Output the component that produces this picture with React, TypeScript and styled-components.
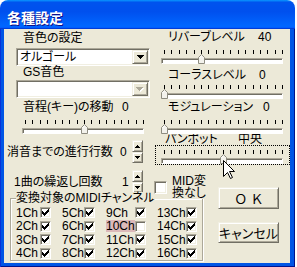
import React from "react";
import styled, { createGlobalStyle } from "styled-components";

const face = "#ece9d8";
const light = "#ffffff";
const soft = "#f1efe2";
const shadow = "#aca899";
const dark = "#716f64";

const GlobalStyle = createGlobalStyle`
  * { box-sizing: border-box; }
  html, body { margin: 0; padding: 0; background: #ffffff; }
  body {
    font-family: "Liberation Sans", "Noto Sans CJK JP", sans-serif;
    font-size: 12px;
    color: #000000;
    font-feature-settings: "palt";
  }
`;

// window chrome
const Window = styled.div`
  width: 295px;
  height: 267px;
  display: flex;
  flex-direction: column;
  border-radius: 8px 8px 0 0;
  overflow: hidden;
`;

const TitleBar = styled.div`
  height: 29px;
  flex: none;
  display: flex;
  align-items: center;
  padding: 4px 0 0 7px;
  background: linear-gradient(
    180deg,
    #0997ff,
    #0053ee 8%,
    #0050ee 40%,
    #0066ff 88%,
    #0066ff 93%,
    #005bff 95%,
    #003dd7 96%,
    #003dd7
  );
  color: #ffffff;
  font-size: 14px;
  font-weight: bold;
  text-shadow: 1px 1px #0f1089;
`;

const Frame = styled.div`
  flex: 1;
  display: flex;
  padding: 0 5px 4px 4px;
  background: #0055e5;
  box-shadow: inset 1px 0 #0831d9, inset -1px 0 #00138c, inset 0 -1px #00138c;
`;

const Body = styled.div`
  flex: 1;
  display: flex;
  flex-direction: column;
  background: ${face};
`;

const Upper = styled.div`
  display: flex;
  height: 139px;
  flex: none;
`;

const LeftPane = styled.div`
  width: 146px;
  display: flex;
  flex-direction: column;
`;

const RightPane = styled.div`
  flex: 1;
  display: flex;
  flex-direction: column;
`;

// text label, with an optional value column
const Caption = styled.div<{ $indent: number; $top: number; $name?: number; $height?: number }>`
  display: grid;
  grid-template-columns: ${(p) => (p.$name ? `${p.$name}px auto` : "auto")};
  padding-left: ${(p) => p.$indent}px;
  margin-top: ${(p) => p.$top}px;
  height: ${(p) => p.$height ?? 14}px;
  line-height: ${(p) => p.$height ?? 14}px;
  white-space: nowrap;
`;

// combo box
const Combo = styled.div<{ $top: number }>`
  display: flex;
  width: 134px;
  height: 18px;
  margin: ${(p) => p.$top}px 0 0 12px;
  padding: 1px;
  background: #ffffff;
  border: 1px solid;
  border-color: ${shadow} ${light} ${light} ${shadow};
  box-shadow: inset 1px 1px ${dark}, inset -1px -1px ${soft};
`;

const ComboText = styled.div`
  flex: 1;
  padding-left: 2px;
  line-height: 14px;
  white-space: nowrap;
`;

const raised = `
  background: ${face};
  border: 1px solid;
  border-color: ${soft} ${dark} ${dark} ${soft};
  box-shadow: inset 1px 1px ${light}, inset -1px -1px ${shadow};
`;

const ComboButton = styled.div`
  width: 16px;
  height: 14px;
  display: flex;
  align-items: center;
  justify-content: center;
  ${raised}
`;

// trackbar
const SliderBox = styled.div<{ $width: number; $left: number; $top: number }>`
  position: relative;
  width: ${(p) => p.$width}px;
  height: 14px;
  margin: ${(p) => p.$top}px 0 0 ${(p) => p.$left}px;
  flex: none;
`;

const Ticks = styled.div`
  display: flex;
  justify-content: space-between;
  height: 4px;
  margin: 0 0 0 3px;
  width: calc(100% - 3px);
`;

const Tick = styled.span`
  width: 1px;
  height: 4px;
  background: #000000;
`;

const Track = styled.div`
  height: 6px;
  margin-top: 4px;
  background: #ffffff;
  border: 1px solid;
  border-color: ${shadow} ${light} ${light} ${shadow};
  box-shadow: inset 1px 1px ${dark};
`;

const Thumb = styled.svg`
  position: absolute;
  top: 4px;
  display: block;
`;

// panpot focus rectangle
const FocusBox = styled.div`
  position: relative;
  width: 135px;
  height: 20px;
  margin-left: 5px;
  padding: 4px 0 0 5px;
  border: 1px dotted #000000;
`;

const Pointer = styled.svg`
  position: absolute;
  left: 67px;
  top: 14px;
  display: block;
`;

// spin rows
const SpinRow = styled.div<{ $indent: number; $top: number; $name: number; $value: number }>`
  display: grid;
  grid-template-columns: ${(p) => `${p.$name}px ${p.$value}px 11px`};
  align-items: center;
  padding-left: ${(p) => p.$indent}px;
  margin-top: ${(p) => p.$top}px;
  height: 23px;
  line-height: 14px;
  white-space: nowrap;
`;

const Spinner = styled.div`
  display: flex;
  flex-direction: column;
  width: 11px;
`;

const SpinButton = styled.div<{ $height: number }>`
  height: ${(p) => p.$height}px;
  display: flex;
  align-items: center;
  justify-content: center;
  ${raised}
`;

// lower area
const Lower = styled.div`
  flex: 1;
  display: grid;
  grid-template-columns: 146px 68px 72px;
  grid-template-rows: 7px 17px 1fr;
`;

const RepeatCell = styled.div`
  grid-column: 1;
  grid-row: 1 / 3;
`;

const MidOption = styled.div`
  grid-column: 2;
  grid-row: 2 / 4;
  align-self: start;
  z-index: 1;
  display: flex;
  align-items: center;
  gap: 5px;
  height: 24px;
  margin-left: 3px;
  padding-left: 1px;
  background: ${face};
`;

const MidText = styled.div`
  line-height: 12px;
  white-space: nowrap;
`;

const CheckBox = styled.span<{ $w: number; $h: number }>`
  flex: none;
  width: ${(p) => p.$w}px;
  height: ${(p) => p.$h}px;
  display: flex;
  align-items: center;
  justify-content: center;
  background: #ffffff;
  border: 1px solid;
  border-color: ${shadow} ${light} ${light} ${shadow};
  box-shadow: inset 1px 1px ${dark}, inset -1px -1px ${soft};
`;

const Buttons = styled.div`
  grid-column: 3;
  grid-row: 1 / 4;
  display: flex;
  flex-direction: column;
  padding-top: 19px;
`;

const PushButton = styled.div<{ $height: number; $top: number; $spacing?: number }>`
  width: 61px;
  height: ${(p) => p.$height}px;
  margin-top: ${(p) => p.$top}px;
  display: flex;
  align-items: center;
  justify-content: center;
  font-size: 13px;
  letter-spacing: ${(p) => p.$spacing ?? 0}px;
  padding-left: ${(p) => p.$spacing ?? 0}px;
  white-space: nowrap;
  ${raised}
`;

const Group = styled.fieldset`
  grid-column: 1 / 3;
  grid-row: 3;
  align-self: start;
  width: 193px;
  height: 69px;
  min-width: 0;
  margin: 0 0 0 6px;
  padding: 1px 0 0 5px;
  border: 1px solid ${shadow};
  box-shadow: inset 1px 1px #ffffff, 1px 1px #ffffff;
`;

const Legend = styled.legend`
  padding: 0;
  line-height: 13px;
  white-space: nowrap;
  background: ${face};
`;

const ChannelGrid = styled.div`
  display: grid;
  grid-template-columns: 35px 33px 40px 40px;
  grid-auto-rows: 13.5px;
  column-gap: 11px;
`;

const ChannelCell = styled.div`
  display: flex;
  align-items: center;
`;

const ChannelName = styled.span<{ $marked: boolean }>`
  flex: 1;
  height: 12px;
  line-height: 12px;
  background: ${(p) => (p.$marked ? "#dcb9b9" : "transparent")};
`;

function DownArrow({ color = "#000" }: { color?: string }) {
  return (
    <svg width="7" height="4" viewBox="0 0 7 4" shapeRendering="crispEdges">
      <path d="M0 0h7v1H0zM1 1h5v1H1zM2 2h3v1H2zM3 3h1v1H3z" fill={color} />
    </svg>
  );
}

function DisabledArrow() {
  return (
    <svg width="8" height="5" viewBox="0 0 8 5" shapeRendering="crispEdges">
      <path d="M1 1h7v1H1zM2 2h5v1H2zM3 3h3v1H3zM4 4h1v1H4z" fill="#ffffff" />
      <path d="M0 0h7v1H0zM1 1h5v1H1zM2 2h3v1H2zM3 3h1v1H3z" fill={shadow} />
    </svg>
  );
}

function SmallArrow({ up }: { up: boolean }) {
  const d = up ? "M2 0h1v1H2zM1 1h3v1H1zM0 2h5v1H0z" : "M0 0h5v1H0zM1 1h3v1H1zM2 2h1v1H2z";
  return (
    <svg width="5" height="3" viewBox="0 0 5 3" shapeRendering="crispEdges">
      <path d={d} fill="#000" />
    </svg>
  );
}

function CheckMark() {
  return (
    <svg width="7" height="7" viewBox="0 0 7 7" shapeRendering="crispEdges">
      <path
        d="M6 0h1v1H6zM5 1h2v1H5zM0 2h1v1H0zM4 2h3v1H4zM0 3h2v1H0zM3 3h3v1H3zM0 4h5v1H0zM1 5h3v1H1zM2 6h1v1H2z"
        fill="#000"
      />
    </svg>
  );
}

function Slider({ width, left, top, value }: { width: number; left: number; top: number; value: number }) {
  return (
    <SliderBox $width={width} $left={left} $top={top}>
      <Ticks>
        {Array.from({ length: 17 }, (_, i) => (
          <Tick key={i} />
        ))}
      </Ticks>
      <Track />
      <Thumb
        width="7"
        height="10"
        viewBox="0 0 7 10"
        style={{ left: Math.round(value * (width - 4)) }}
      >
        <path d="M3.5 0.5 L6.5 3.5 V9.5 H0.5 V3.5 Z" fill="#f3f2ec" stroke="#8e8c80" />
        <path d="M1.5 4 L3.5 1.8" stroke="#ffffff" fill="none" />
      </Thumb>
    </SliderBox>
  );
}

function Spin() {
  return (
    <Spinner>
      <SpinButton $height={12}>
        <SmallArrow up />
      </SpinButton>
      <SpinButton $height={11}>
        <SmallArrow up={false} />
      </SpinButton>
    </Spinner>
  );
}

const nameWidths = [24, 22, 29, 29];
const channelRows = [
  [1, 5, 9, 13],
  [2, 6, 10, 14],
  [3, 7, 11, 15],
  [4, 8, 12, 16],
];

export default function App() {
  return (
    <>
      <GlobalStyle />
      <Window>
        <TitleBar>各種設定</TitleBar>
        <Frame>
          <Body>
            <Upper>
              <LeftPane>
                <Caption $indent={19} $top={2}>
                  音色の設定
                </Caption>
                <Combo $top={3}>
                  <ComboText>オルゴール</ComboText>
                  <ComboButton>
                    <DownArrow />
                  </ComboButton>
                </Combo>
                <Caption $indent={19} $top={0} $height={13}>
                  GS音色
                </Caption>
                <Combo $top={1}>
                  <ComboText />
                  <ComboButton>
                    <DisabledArrow />
                  </ComboButton>
                </Combo>
                <Caption $indent={19} $top={2} $name={99}>
                  <span>音程(キー)の移動</span>
                  <span>0</span>
                </Caption>
                <Slider width={122} left={18} top={6} value={0.5} />
                <SpinRow $indent={3} $top={6} $name={113} $value={12}>
                  <span>消音までの進行行数</span>
                  <span>0</span>
                  <Spin />
                </SpinRow>
              </LeftPane>
              <RightPane>
                <Caption $indent={18} $top={1} $name={90}>
                  <span>リバーブレベル</span>
                  <span>40</span>
                </Caption>
                <Slider width={122} left={11} top={6} value={40 / 127} />
                <Caption $indent={18} $top={4} $name={91}>
                  <span>コーラスレベル</span>
                  <span>0</span>
                </Caption>
                <Slider width={122} left={11} top={3} value={0} />
                <Caption $indent={18} $top={1} $name={95}>
                  <span>モジュレーション</span>
                  <span>0</span>
                </Caption>
                <Slider width={122} left={11} top={6} value={0} />
                <Caption $indent={15} $top={0} $name={73} $height={11}>
                  <span>パンポット</span>
                  <span>中央</span>
                </Caption>
                <FocusBox>
                  <Slider width={122} left={0} top={0} value={0.5} />
                  <Pointer width="13" height="20" viewBox="0 0 13 20">
                    <path
                      d="M0.5 0.5 V16.5 L4.5 12.5 L7.5 18.5 L9.5 17.5 L6.5 11.5 H11.5 Z"
                      fill="#ffffff"
                      stroke="#000000"
                    />
                  </Pointer>
                </FocusBox>
              </RightPane>
            </Upper>
            <Lower>
              <RepeatCell>
                <SpinRow $indent={10} $top={2} $name={108} $value={10}>
                  <span>1曲の繰返し回数</span>
                  <span>1</span>
                  <Spin />
                </SpinRow>
              </RepeatCell>
              <MidOption>
                <CheckBox $w={13} $h={13} />
                <MidText>
                  MID変
                  <br />
                  換なし
                </MidText>
              </MidOption>
              <Buttons>
                <PushButton $height={22} $top={0} $spacing={5}>
                  ＯＫ
                </PushButton>
                <PushButton $height={21} $top={13}>
                  キャンセル
                </PushButton>
              </Buttons>
              <Group>
                <Legend>変換対象のMIDIチャンネル</Legend>
                <ChannelGrid>
                  {channelRows.flat().map((ch, i) => (
                    <ChannelCell key={ch}>
                      <ChannelName $marked={ch === 10} style={{ maxWidth: nameWidths[i % 4] }}>
                        {ch}Ch
                      </ChannelName>
                      <CheckBox $w={11} $h={11}>
                        {ch !== 10 && <CheckMark />}
                      </CheckBox>
                    </ChannelCell>
                  ))}
                </ChannelGrid>
              </Group>
            </Lower>
          </Body>
        </Frame>
      </Window>
    </>
  );
}
